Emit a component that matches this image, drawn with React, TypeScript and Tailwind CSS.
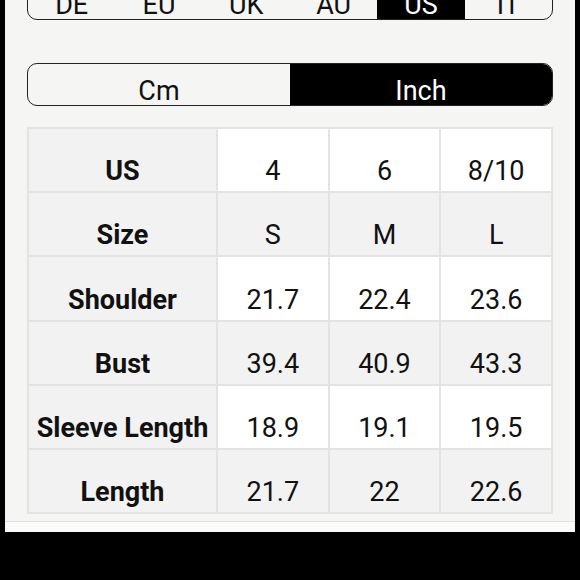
import React from "react";

const regions = ["DE", "EU", "UK", "AU", "US", "IT"];

const rows: { label: string; values: string[] }[] = [
  { label: "US", values: ["4", "6", "8/10"] },
  { label: "Size", values: ["S", "M", "L"] },
  { label: "Shoulder", values: ["21.7", "22.4", "23.6"] },
  { label: "Bust", values: ["39.4", "40.9", "43.3"] },
  { label: "Sleeve Length", values: ["18.9", "19.1", "19.5"] },
  { label: "Length", values: ["21.7", "22", "22.6"] },
];

const App: React.FC = () => {
  return (
    <div
      className="h-[580px] w-[580px] overflow-hidden bg-black text-[#111]"
      style={{ fontFamily: "Roboto, 'Liberation Sans', sans-serif" }}
    >
      <div className="ml-[5px] flex h-[532px] w-[570px] flex-col bg-[#f5f5f4]">
        <div className="flex flex-1 flex-col px-[22px]">
          {/* region tabs */}
          <div className="mt-[-23.5px] flex h-[43px] overflow-hidden rounded-[10px] border-[1.5px] border-[#222]">
            {regions.map((r) => (
              <div
                key={r}
                className={`flex flex-1 items-end justify-center text-[27px] leading-[27px] ${
                  r === "US" ? "bg-black text-white" : ""
                }`}
              >
                {r}
              </div>
            ))}
          </div>

          {/* unit toggle */}
          <div className="mt-[43.5px] flex h-[43px] overflow-hidden rounded-[10px] border-[1.5px] border-[#222]">
            <div className="flex flex-1 items-end justify-center text-[27px] leading-[27px]">Cm</div>
            <div className="flex flex-1 items-end justify-center bg-black text-[27px] leading-[27px] text-white">
              Inch
            </div>
          </div>

          {/* size table */}
          <div className="mt-[21px] grid h-[387px] grid-cols-[187px_1fr_1fr_1fr] grid-rows-6 gap-[2px] bg-[#e3e3e3] p-[2px]">
            {rows.map((row, i) => {
              const shaded = i % 2 === 1;
              return (
                <React.Fragment key={row.label}>
                  <div className="flex items-end justify-center bg-[#f2f2f2] pb-[5px] text-[27px] font-bold leading-[30px]">
                    {row.label}
                  </div>
                  {row.values.map((v, j) => (
                    <div
                      key={j}
                      className={`flex items-end justify-center pb-[5px] text-[27px] leading-[30px] ${
                        shaded ? "bg-[#f2f2f2]" : "bg-white"
                      }`}
                    >
                      {v}
                    </div>
                  ))}
                </React.Fragment>
              );
            })}
          </div>
        </div>
        <div className="h-[11px] border-t-[1.5px] border-[#e0e0e0] bg-[#fbfbfb]" />
      </div>
    </div>
  );
};

export default App;
